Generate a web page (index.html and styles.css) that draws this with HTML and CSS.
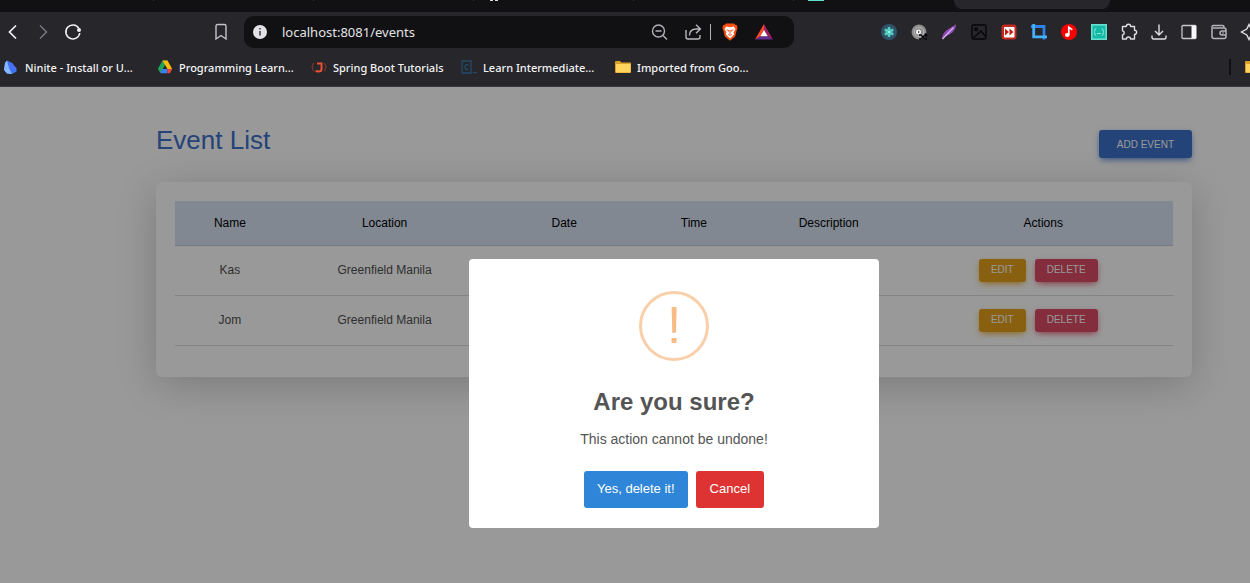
FILE: index.html
```html
<!DOCTYPE html>
<html lang="en">
<head>
<meta charset="utf-8">
<meta name="viewport" content="width=device-width, initial-scale=1">
<title>Event List</title>
<link rel="stylesheet" href="styles.css">
</head>
<body>
<header class="browser">
  <div class="tabs">
    <span class="tab"></span><span class="tab"></span><span class="tab"></span>
    <span class="tab tab-github"><i class="favicon-feet"></i></span><span class="tab"></span>
    <span class="tab tab-teal"><i class="favicon-teal"></i></span>
    <span class="tab tab-active"></span>
  </div>
  <div class="toolbar">
    <nav class="nav-buttons" aria-label="Navigation">
      <button class="tool" aria-label="Back"><svg viewBox="0 0 18 18"><path d="M12 2.500 5.500 9l6.500 6.500" stroke="#f4f4f6" stroke-width="1.700"/></svg></button>
      <button class="tool" aria-label="Forward"><svg viewBox="0 0 18 18"><path d="M6 2.500 12.500 9 6 15.500" stroke="#77777d" stroke-width="1.500"/></svg></button>
      <button class="tool" aria-label="Reload"><svg viewBox="0 0 18 18"><path d="M14.800 5.200A7 7 0 1 0 15.800 10" stroke="#f0f0f2" stroke-width="1.600"/><circle cx="15" cy="7" r="2" fill="#f0f0f2"/></svg></button>
    </nav>
    <button class="tool" aria-label="Bookmark"><svg viewBox="0 0 18 18"><path d="M4 3q0-1.500 1.500-1.500h7Q14 1.500 14 3v13l-5-3.500L4 16z" stroke="#c4c4ca" stroke-width="1.400"/></svg></button>
    <div class="address">
      <svg class="site-info" viewBox="0 0 14 14" aria-hidden="true"><circle cx="7" cy="7" r="7" fill="#e2e2e6"/><path d="M7 6v4.500M7 3v1.600" stroke="#55555a" stroke-width="1.800"/></svg>
      <input class="url" aria-label="Address" value="localhost:8081/events">
      <button class="tool tool-wide" aria-label="Zoom"><svg viewBox="0 0 18 18"><g stroke="#b0b0b6" stroke-width="1.400"><circle cx="8.500" cy="8" r="6"/><path d="M5.500 8h6M13 12.500l4 4"/></g></svg></button>
      <button class="tool tool-wide" aria-label="Share"><svg viewBox="0 0 18 18"><g stroke="#b8b8be" stroke-width="1.400"><path d="M2 7v7q0 2 2 2h10q2 0 2-2v-2M5.500 12.500q0-6.500 7-6.500h3.500M12 1.800 16.400 6 12 10.200"/></g></svg></button>
      <span class="divider"></span>
      <button class="tool tool-brand" aria-label="Brave Shields"><svg viewBox="0 0 18 18"><path d="M5 .500h8l1.200 1.300 1.800.400.500 3.300-.700 1.500-1.700 6.500L9 17.700 3.900 13.500 2.200 7l-.700-1.500.500-3.300 1.800-.400z" fill="#fb4f12"/><path d="M5.200 3.500 9 4.200l3.800-.700 1.700 2.700-2 3 .7 2L9 15.500l-4.200-4.300.7-2-2-3z" fill="#fff"/><path d="M5.500 6.800 8 7.500 7.600 8.700M12.500 6.800 10 7.500l.4 1.200M9 7v4M7.200 11.200 9 12.500l1.800-1.300" stroke="#fb4f12" stroke-width=".900"/></svg></button>
      <button class="tool tool-brand" aria-label="Brave Rewards"><svg viewBox="0 0 18 18"><path d="M9 1 0 16.500l5.500-3.300L9 6.500z" fill="#ff4724"/><path d="M9 1l9 15.500-5.500-3.300L9 6.500z" fill="#9e1f63"/><path d="M0 16.500h18l-5.500-3.300h-7z" fill="#662d91"/><path d="M9 6.700l3.700 6.500H5.300z" fill="#fff"/></svg></button>
    </div>
    <div class="extensions">
      <button class="tool" aria-label="Flower"><svg viewBox="0 0 18 18"><circle cx="9" cy="9" r="8" fill="#30536a"/><circle cx="9" cy="9" r="3.600" fill="#3fb5aa"/><path d="M9 4v10M4.700 6.500l8.600 5M13.300 6.500l-8.600 5" stroke="#54cfc2" stroke-width="2.400"/><circle cx="9" cy="9" r="1" fill="#c7f6ef"/></svg></button>
      <button class="tool" aria-label="Target"><svg viewBox="0 0 18 18"><circle cx="9" cy="9" r="7.500" fill="#8c8c8c"/><circle cx="9" cy="9" r="4.800" stroke="#b9b9b9"/><circle cx="8.500" cy="9" r="2.500" fill="#f2f2f2"/><path d="M8 8l2 1-2 1z" fill="#333"/><path d="M9 12h2l4 4h2M9 16h2l4-4h2M15 10.500 17 12l-2 1.500" stroke="#080808" stroke-width="1.300"/></svg></button>
      <button class="tool" aria-label="Feather"><svg viewBox="0 0 18 18"><path d="M2 16.500C2 8 9 6 16 1.300c0 6.500-5 10.500-11.500 12.200z" fill="#8d4bb6"/><path d="M2.500 16 13.500 4.500" stroke="#e0b7f4" stroke-width="1.100"/></svg></button>
      <button class="tool" aria-label="Image"><svg viewBox="0 0 18 18"><g stroke="#060607" stroke-width="1.300"><rect x="2" y="2" width="14" height="14" rx="1.500"/><circle cx="6.200" cy="6.200" r="1.400"/><path d="M3 15 11 8l5 6"/></g></svg></button>
      <button class="tool" aria-label="Skip"><svg viewBox="0 0 18 18"><rect x="1.500" y="1.500" width="15" height="15" rx="3" fill="#c52820"/><rect x="4" y="4" width="10.500" height="10.500" rx="1" fill="#fff"/><path d="M5 5.500l4 3.500-4 3.500zM9.500 5.500l4 3.500-4 3.500z" fill="#c41d18"/></svg></button>
      <button class="tool" aria-label="Crop"><svg viewBox="0 0 18 18"><path d="M1 3.500h13v13" stroke="#2f82eb" stroke-width="2.800"/><path d="M3.700 1v12.800H17" stroke="#45b1fb" stroke-width="2.800"/></svg></button>
      <button class="tool" aria-label="Music"><svg viewBox="0 0 18 18"><circle cx="9" cy="9" r="8" fill="#f80000"/><ellipse cx="7.300" cy="12" rx="2.300" ry="2" fill="#fff"/><path d="M8.800 12V4.200l3.500 2.700" stroke="#fff" stroke-width="1.700"/></svg></button>
      <button class="tool" aria-label="JSON"><svg viewBox="0 0 18 18"><rect x="1.800" y="1.800" width="14.400" height="14.400" fill="#14b8a6" stroke="#65dfce" stroke-width="1.600"/><path d="M6.200 5.500Q5 5.500 5 7t-1 2q1 .500 1 2t1.200 1.500M11.800 5.500Q13 5.500 13 7t1 2q-1 .500-1 2t-1.200 1.500M7 10.500h4" stroke="#9cf0df" stroke-width=".900"/></svg></button>
      <button class="tool" aria-label="Extensions"><svg viewBox="0 0 18 18"><path d="M2.500 3.500h3.800a2.200 2.200 0 0 1 4.400 0h3.800v3.700a2.100 2.100 0 0 1 0 4.200v4.600h-4a2 2 0 0 0-4 0h-4v-4a2.200 2.200 0 0 0 0-4.300z" stroke="#dedee2" stroke-width="1.400" stroke-linejoin="round"/></svg></button>
      <button class="tool" aria-label="Downloads"><svg viewBox="0 0 18 18"><path d="M9 1.500v10M5 8l4 4 4-4M2 12.500v2q0 1.500 1.500 1.500h11q1.500 0 1.500-1.500v-2" stroke="#dedee2" stroke-width="1.400"/></svg></button>
      <button class="tool" aria-label="Side panel"><svg viewBox="0 0 18 18"><rect x="2" y="2.500" width="14" height="13" rx="1" stroke="#c8c8cc" stroke-width="1.300"/><path d="M11.500 2.500H16v13h-4.500z" fill="#f8f8fa"/></svg></button>
      <button class="tool" aria-label="Wallet"><svg viewBox="0 0 18 18"><g stroke="#b4b4ba" stroke-width="1.500"><path d="M14 5V4q0-1.500-1.500-1.500h-9Q2 2.500 2 4v9.500q0 2 2 2h10q2 0 2-2V7q0-2-2-2H3"/><path d="M16 8h-4q-2 0-2 2t2 2h4"/></g><path d="M12 10h2" stroke="#aaaab0"/></svg></button>
      <button class="tool" aria-label="Leo"><svg viewBox="0 0 18 18"><path d="M9 1.500 11.200 6l5.300 3-5.300 3L9 16.500 6.800 12 1.500 9l5.300-3z" stroke="#dedee2" stroke-width="1.400"/></svg></button>
    </div>
  </div>
  <nav class="bookmarks" aria-label="Bookmarks">
    <a class="bookmark" href="#"><svg viewBox="0 0 16 16"><path d="M4 1.500 9 4l4.500 5.500v3L9 15l-5-.500L1 11l1-7z" fill="#3b77ed"/><path d="M4 1.500 6 9l3 6-5-.500L1 11l1-7z" fill="#85b6ff"/><path d="M6 3l3 1 4.500 5.500L8 12z" fill="#4b6ff2"/></svg>Ninite - Install or U...</a>
    <a class="bookmark" href="#"><svg viewBox="0 0 16 16"><path d="M5.500 1.500h5L3.500 14 .800 10z" fill="#22a455"/><path d="M5.500 1.500h5L15.200 10h-4.800z" fill="#fdb90b"/><path d="M4.800 10h5.700v4.200H3.500z" fill="#3c81f4"/><path d="M10.500 10h4.700L13 14.200h-2.500z" fill="#ec4337"/></svg>Programming Learn...</a>
    <a class="bookmark bookmark-short" href="#"><svg viewBox="0 0 16 16"><path d="M3 4Q1.800 4 1.800 6t-1.300 2Q1.800 8.300 1.800 10T3 12.500M13 4q1.200 0 1.200 2t1.300 2q-1.300.3-1.300 2T13 12.500" stroke="#92382a"/><path d="M6 4.500h4.500V10q0 2.500-3 2.500-2 0-2.500-1" stroke="#ef5132" stroke-width="2"/></svg>Spring Boot Tutorials</a>
    <a class="bookmark" href="#"><svg viewBox="0 0 16 16"><path d="M1 2h9v12H1zM7.500 6Q4 5 4 8t3.500 2.500M12 13.700h4" stroke="#234b68" stroke-width="1.300"/></svg>Learn Intermediate...</a>
    <a class="bookmark" href="#"><svg viewBox="0 0 16 16"><path d="M0 3q0-1 1-1h4l1.500 1.500H15q1 0 1 1V13q0 1-1 1H1q-1 0-1-1z" fill="#d9a027"/><path d="M1 5h14.500v8.500H1z" fill="#ffd55f"/></svg>Imported from Goo...</a>
    <span class="bookmark-end"><span class="bookmark-rule"></span><svg viewBox="0 0 16 16"><path d="M0 3q0-1 1-1h15v12H1q-1 0-1-1z" fill="#d9a027"/><path d="M1 5h15v8.500H1z" fill="#ffd55f"/></svg></span>
  </nav>
</header>

<div class="viewport">
  <main class="page">
    <div class="page-head">
      <h1 class="page-title">Event List</h1>
      <button class="btn btn-add">Add Event</button>
    </div>
    <section class="card">
      <table class="events">
        <colgroup><col class="col-name"><col class="col-location"><col class="col-date"><col class="col-time"><col class="col-description"><col class="col-actions"></colgroup>
        <thead><tr><th>Name</th><th>Location</th><th>Date</th><th>Time</th><th>Description</th><th>Actions</th></tr></thead>
        <tbody>
          <tr><td>Kas</td><td>Greenfield Manila</td><td></td><td></td><td></td><td><div class="actions"><button class="btn btn-edit">Edit</button><button class="btn btn-delete">Delete</button></div></td></tr>
          <tr><td>Jom</td><td>Greenfield Manila</td><td></td><td></td><td></td><td><div class="actions"><button class="btn btn-edit">Edit</button><button class="btn btn-delete">Delete</button></div></td></tr>
        </tbody>
      </table>
    </section>
  </main>
  <div class="overlay">
    <div class="dialog" role="dialog" aria-modal="true" aria-labelledby="dialog-title">
      <div class="warning" aria-hidden="true">!</div>
      <h2 class="dialog-title" id="dialog-title">Are you sure?</h2>
      <p class="dialog-text">This action cannot be undone!</p>
      <div class="dialog-actions">
        <button class="dialog-btn confirm">Yes, delete it!</button>
        <button class="dialog-btn cancel">Cancel</button>
      </div>
    </div>
  </div>
</div>
</body>
</html>
```
FILE: styles.css
```css
* { box-sizing: border-box; }

body {
  margin: 0;
  min-height: 100vh;
  display: flex;
  flex-direction: column;
  overflow: hidden;
  font-family: "Liberation Sans", Arial, sans-serif;
  background: #fff;
}

button { border: 0; font-family: inherit; cursor: pointer; }
svg { fill: none; display: block; }

/* Browser bar */
.browser {
  background: #26262b;
  border-bottom: 1px solid #3a3a3f;
  font-family: "Noto Sans", sans-serif;
  color: #f4f4f6;
}

.tabs {
  height: 12px;
  display: flex;
  align-items: flex-start;
  background: #111113;
  overflow: hidden;
}
.tab { flex: 0 0 160px; height: 1px; border-right: 1px solid #333338; }
.tab:first-child { flex-basis: 154px; }
.tab-github, .tab-teal { padding-left: 16px; }
.tab-teal { padding-left: 14px; border: 0; }
.favicon-feet { display: block; width: 8px; height: 1px; border: solid #d8d8dc; border-width: 0 3px; }
.favicon-teal { display: block; width: 16px; height: 1px; background: #5fdccb; }
.tab-active { flex-basis: 156px; height: 9px; background: #26262b; border: 0; border-radius: 0 0 8px 8px; }

.toolbar {
  display: grid;
  grid-template-columns: 206px 38px 1fr 456px;
  align-items: center;
  height: 40px;
}
.nav-buttons { display: flex; margin-left: -2px; }
.tool {
  flex: 0 0 30px;
  width: 30px;
  height: 30px;
  padding: 6px;
  background: none;
}
.tool svg { width: 18px; height: 18px; }
.address {
  display: flex;
  align-items: center;
  height: 32px;
  padding: 0 15px 0 9px;
  border-radius: 10px;
  background: #111113;
}
.site-info { width: 14px; height: 14px; }
.url {
  flex: 1;
  min-width: 0;
  padding: 0 0 0 15px;
  border: 0;
  background: none;
  font: 13px "Noto Sans", sans-serif;
  color: #e2e2e6;
}
.tool-wide { flex-basis: 34px; width: 34px; padding: 6px 8px; }
.divider { width: 1px; height: 16px; background: #b0b0b5; }
.tool-brand { flex-basis: 34px; width: 34px; padding: 6px 10px; }
.extensions { display: flex; padding-left: 80px; overflow: hidden; }

.bookmarks {
  display: flex;
  align-items: center;
  height: 34px;
  padding: 0 0 4px 3px;
  overflow: hidden;
}
.bookmark {
  flex: 0 0 154px;
  display: flex;
  align-items: center;
  gap: 6px;
  font-size: 11px;
  font-weight: 500;
  color: inherit;
  text-decoration: none;
  white-space: nowrap;
}
.bookmark-short { flex-basis: 150px; }
.bookmark svg, .bookmark-end svg { width: 16px; height: 16px; flex: none; }
.bookmark-end { flex: none; display: flex; align-items: center; gap: 14px; margin: 0 -11px 0 auto; }
.bookmark-rule { width: 2px; height: 16px; background: #101012; }

/* Event page */
.viewport { position: relative; flex: 1; }
.page { padding: 36px 58px 0 156px; }
.page-head { display: flex; justify-content: space-between; align-items: flex-start; }
.page-title { margin: 0; font-size: 26px; line-height: 34px; font-weight: 400; color: #3b71ca; }

.btn {
  border-radius: 3px;
  padding: 0 12px;
  height: 23px;
  font-size: 10px;
  line-height: 15px;
  text-transform: uppercase;
  white-space: nowrap;
  color: #fff;
}
.btn-add { height: 28px; margin-top: 7px; padding: 0 18px; background: #3b71ca; box-shadow: 0 3px 7px -3px #3b71ca, 0 2px 6px rgba(59, 113, 202, .3); }
.btn-edit { background: #e4a11b; padding-bottom: 2px; box-shadow: 0 3px 7px -3px #e4a11b, 0 2px 6px rgba(228, 161, 27, .3); }
.btn-delete { background: #dc4c64; padding-bottom: 2px; box-shadow: 0 3px 7px -3px #dc4c64, 0 2px 6px rgba(220, 76, 100, .3); }

.card {
  margin-top: 24px;
  padding: 19px 19px 31px;
  border-radius: 6px;
  background: #fff;
  box-shadow: 0 8px 40px rgba(0, 0, 0, .2);
}
.events { width: 100%; table-layout: fixed; border-collapse: collapse; font-size: 12px; line-height: 18px; color: #4f4f4f; }
.events th, .events td { padding: 0; text-align: center; font-weight: 400; border-bottom: 1px solid #dcdcdc; }
.events th { height: 44px; background: #d8e3f3; border-color: #c3cddd; color: #000; }
.events td { height: 50px; }
.col-name { width: 11%; }
.col-location { width: 20%; }
.col-date { width: 16%; }
.col-time { width: 10%; }
.col-description { width: 17%; }
.col-actions { width: 26%; }
.actions { display: flex; justify-content: center; gap: 9px; padding-right: 10px; }

/* Confirmation dialog */
.overlay {
  position: absolute;
  inset: 0;
  padding: 172px 0 0 98px;
  background: rgba(0, 0, 0, .4);
}
.dialog {
  width: 410px;
  margin: 0 auto;
  padding: 32px 20px 20px;
  border-radius: 4px;
  background: #fff;
  text-align: center;
  color: #545454;
}
.warning {
  width: 70px;
  height: 70px;
  margin: 0 auto;
  border: 3px solid #facea8;
  border-radius: 50%;
  font-size: 51px;
  line-height: 64px;
  color: #f8bb86;
}
.dialog-title { margin: 24px 0 0; font-size: 24px; line-height: 34px; }
.dialog-text { margin: 11px 0 0; font-size: 14px; line-height: 18px; }
.dialog-actions { display: flex; justify-content: center; gap: 8px; margin-top: 23px; }
.dialog-btn { height: 37px; padding: 0 14px 2px; border-radius: 3px; font-size: 13px; color: #fff; }
.confirm { padding: 0 13px 2px; background: #2f86d8; }
.cancel { background: #dd3333; }
```
